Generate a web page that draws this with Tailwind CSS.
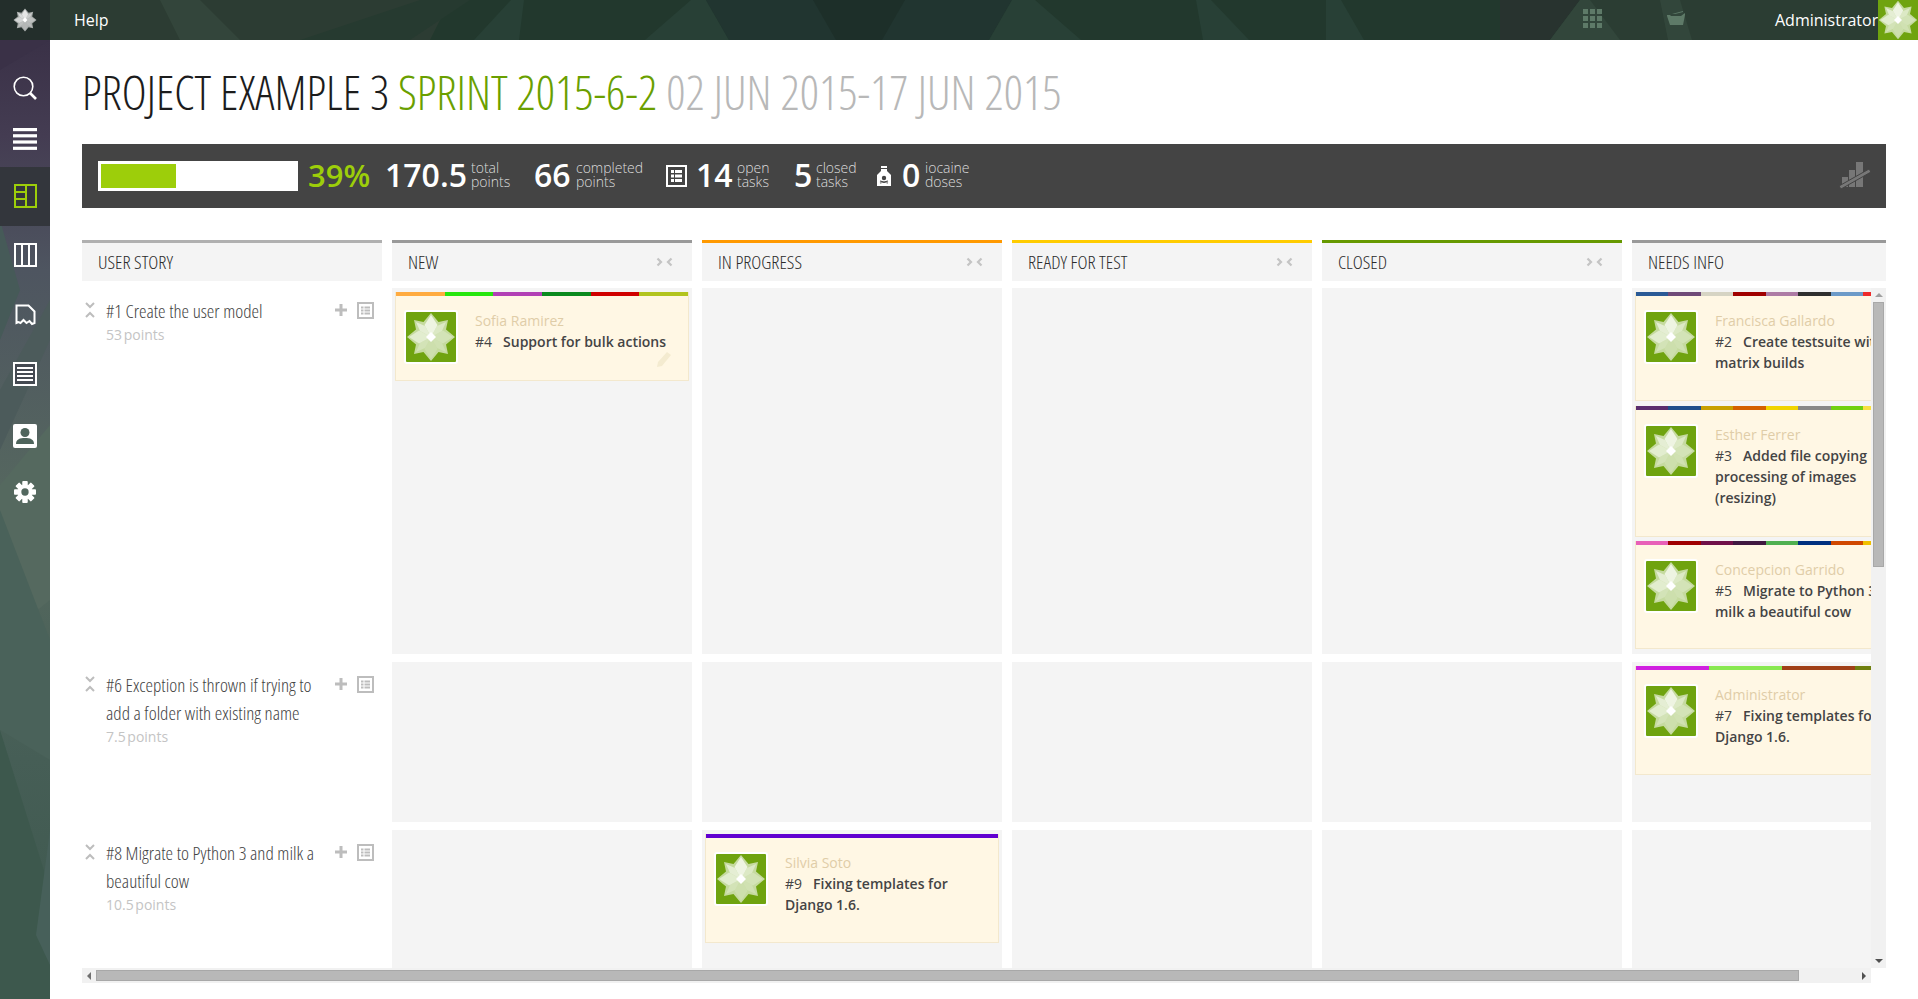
<!DOCTYPE html>
<html lang="en">
<head>
<meta charset="utf-8">
<title>Taskboard</title>
<script src="https://cdn.jsdelivr.net/npm/@tailwindcss/browser@4"></script>
</head>
<body class="bg-white font-['Open_Sans',sans-serif] text-[#444] overflow-hidden">
<svg width="0" height="0" class="absolute">
  <symbol id="star" viewBox="0 0 100 100">
    <g fill="#fff">
      <polygon points="50,2 65,20 84,16 80,35 98,50 80,65 84,84 65,80 50,98 35,80 16,84 20,65 2,50 20,35 16,16 35,20" opacity=".6"/>
      <polygon points="50,50 37,26 50,6 63,26" opacity=".7"/>
      <polygon points="50,50 74,37 94,50 74,63" opacity=".25"/>
      <polygon points="50,50 63,74 50,94 37,74" opacity=".15"/>
      <polygon points="50,50 26,63 6,50 26,37" opacity=".5"/>
      <polygon points="50,50 62,28 80,20 72,38" opacity=".4"/>
      <polygon points="50,50 72,62 80,80 62,72" opacity=".2"/>
      <polygon points="50,50 38,72 20,80 28,62" opacity=".25"/>
      <polygon points="50,50 28,38 20,20 38,28" opacity=".55"/>
      <polygon points="50,40 60,50 50,60 40,50"/>
    </g>
  </symbol>
  <symbol id="boardicon" viewBox="0 0 17 17">
    <rect x="1" y="1" width="15" height="15" fill="none" stroke="#bdbdbd" stroke-width="2"/>
    <g fill="#bdbdbd"><rect x="4" y="4.5" width="2.5" height="2"/><rect x="7.5" y="4.5" width="5.5" height="2"/><rect x="4" y="7.5" width="2.5" height="2"/><rect x="7.5" y="7.5" width="5.5" height="2"/><rect x="4" y="10.5" width="2.5" height="2"/><rect x="7.5" y="10.5" width="5.5" height="2"/></g>
  </symbol>
  <symbol id="fold" viewBox="0 0 10 16">
    <path d="M1 1l4 4 4-4M1 15l4-4 4 4" fill="none" stroke="#bdbdbd" stroke-width="2"/>
  </symbol>
  <symbol id="squish" viewBox="0 0 17 10">
    <path d="M1.5 1.5L5 5 1.5 8.5M15.5 1.5L12 5l3.5 3.5" fill="none" stroke="#c4c4c4" stroke-width="2.2"/>
  </symbol>
  <symbol id="plus" viewBox="0 0 12 12">
    <path d="M4.5 0h3v4.5H12v3H7.5V12h-3V7.5H0v-3h4.5z" fill="#bdbdbd"/>
  </symbol>
</svg>

<!-- top bar -->
<header class="relative h-10 bg-[#22382d] flex items-center overflow-hidden">
  <svg class="absolute inset-0" width="1918" height="40" aria-hidden="true">
    <polygon points="50,0 450,0 430,40 50,40" fill="#2c3c33"/>
    <polygon points="160,0 200,0 240,40 180,40" fill="#33453b"/>
    <polygon points="420,0 470,0 410,40 300,40" fill="#263a30"/>
    <polygon points="511,0 524,0 519,40 474,40" fill="#284036"/>
    <polygon points="691,0 706,0 729,40 645,40" fill="#284036"/>
    <polygon points="706,0 1012,0 989,40 729,40" fill="#213530"/>
    <polygon points="813,0 905,0 882,40 836,40" fill="#1d2f29"/>
    <polygon points="1012,0 1035,0 1081,40 989,40" fill="#284036"/>
    <polygon points="1196,0 1211,0 1249,40 1203,40" fill="#284036"/>
    <polygon points="1326,0 1341,0 1364,40 1326,40" fill="#284036"/>
    <polygon points="1500,0 1580,0 1550,40 1500,40" fill="#28332f"/>
    <polygon points="1580,0 1878,0 1878,40 1550,40" fill="#2b3d33"/>
    <polygon points="1580,0 1590,0 1620,40 1550,40" fill="#32463b"/>
    <polygon points="1660,0 1680,0 1692,40 1668,40" fill="#32463b"/>
  </svg>
  <div class="relative w-[50px] h-10 bg-[#232e2b] flex items-center justify-center shrink-0">
    <svg class="w-6 h-6"><use href="#star"/></svg>
  </div>
  <span class="relative ml-6 text-[16px] text-white">Help</span>
  <div class="relative ml-auto flex items-center h-10">
    <svg class="w-5 h-5 mr-[63px] mb-[2px]" viewBox="0 0 20 20" fill="#5e7a68" aria-hidden="true"><rect x="0" y="0" width="5" height="5"/><rect x="7" y="0" width="5" height="5"/><rect x="14" y="0" width="5" height="5"/><rect x="0" y="7" width="5" height="5"/><rect x="7" y="7" width="5" height="5"/><rect x="14" y="7" width="5" height="5"/><rect x="0" y="14" width="5" height="5"/><rect x="7" y="14" width="5" height="5"/><rect x="14" y="14" width="5" height="5"/></svg>
    <svg class="w-5 h-5 mr-[89px] mb-[2px]" viewBox="0 0 20 20" fill="#5e7a68" aria-hidden="true"><path d="M1 6h3l1 1h10l4-3v2l-2 10H4L1 7z"/><path d="M6 5l11-3v1L9 5z"/></svg>
    <span class="text-[16px] text-white w-[103px] whitespace-nowrap">Administrator</span>
    <div class="relative w-10 h-10 bg-[#6fa30f] shrink-0"><svg class="w-10 h-10"><use href="#star"/></svg></div>
  </div>
</header>

<div class="flex h-[959px]">
  <!-- sidebar -->
  <nav class="relative w-[50px] shrink-0 overflow-hidden bg-[linear-gradient(180deg,#3a3147_0%,#443c52_10%,#4e5560_24%,#56695f_50%,#465e56_75%,#3d584d_100%)]">
    <svg class="absolute inset-0" width="50" height="959" aria-hidden="true">
      <polygon points="0,30 50,0 50,0 0,0" fill="#3a3147"/>
      <polygon points="0,180 20,250 0,300" fill="#465a58"/>
      <polygon points="50,300 0,410 0,350 50,260" fill="#4c5b5b"/>
      <polygon points="50,385 0,445 0,600 50,560" fill="#55695f"/>
      <polygon points="0,470 50,600 50,720 0,690" fill="#4a625a"/>
      <polygon points="0,690 50,850 50,959 0,959" fill="#3d584d"/>
      <polygon points="50,790 36,895 50,925" fill="#47605a"/>
    </svg>
    <div class="relative pt-[22px] flex flex-col">
      <a class="h-[52px] flex items-center justify-center"><svg class="w-6 h-6" viewBox="0 0 24 24" fill="none" stroke="#fff" aria-hidden="true"><circle cx="10.5" cy="10.5" r="9.3" stroke-width="1.6"/><path d="M17 17l6 6" stroke-width="2.6"/></svg></a>
      <a class="h-[53px] flex items-center justify-center"><svg class="w-6 h-[22px] mb-1" viewBox="0 0 24 22" fill="#fff" aria-hidden="true"><rect y="0" width="24" height="3.2"/><rect y="6.2" width="24" height="3.2"/><rect y="12.4" width="24" height="3.2"/><rect y="18.7" width="24" height="3.2"/></svg></a>
      <a class="h-[59px] flex items-center justify-center bg-[#33363c]"><svg class="w-[23px] h-6 mb-[2px]" viewBox="0 0 23 24" fill="none" stroke="#9dce0a" stroke-width="2" aria-hidden="true"><rect x="1" y="1" width="21" height="22"/><path d="M12 1v22M1 8h11M1 15h11"/></svg></a>
      <a class="h-[59px] flex items-center justify-center"><svg class="w-[23px] h-6 mb-[2px]" viewBox="0 0 23 24" fill="none" stroke="#fff" stroke-width="2" aria-hidden="true"><rect x="1" y="1" width="21" height="22"/><path d="M8 1v22M15 1v22"/></svg></a>
      <a class="h-[59px] flex items-center justify-center"><svg class="w-[21px] h-[22px]" viewBox="0 0 21 22" fill="none" stroke="#fff" stroke-width="2" aria-hidden="true"><path d="M1.5 19V1.500h12l6 6V19l-2.500 1-2.500-3-3 2-3-3-3 3-2-1z"/></svg></a>
      <a class="h-[59px] flex items-center justify-center"><svg class="w-6 h-6" viewBox="0 0 24 24" aria-hidden="true"><rect x="1" y="1" width="22" height="22" fill="#454a52" stroke="#fff" stroke-width="2"/><path d="M4 6h16M4 10h16M4 14h16M4 18h16" stroke="#fff" stroke-width="2"/></svg></a>
      <a class="h-[62px] flex items-center justify-center"><svg class="w-6 h-6 mt-1" viewBox="0 0 24 24" aria-hidden="true"><rect width="24" height="24" rx="2" fill="#fff"/><circle cx="12" cy="8.500" r="4.500" fill="#4e645c"/><path d="M3 20c0-5 4-6 9-6s9 1 9 6z" fill="#4e645c"/></svg></a>
      <a class="h-[56px] flex items-center justify-center"><svg class="w-[22px] h-[22px] mb-[2px]" viewBox="0 0 24 24" aria-hidden="true"><g fill="#fff"><circle cx="12" cy="12" r="8"/><rect x="9" y="0" width="6" height="24" rx="1"/><rect x="9" y="0" width="6" height="24" rx="1" transform="rotate(45 12 12)"/><rect x="9" y="0" width="6" height="24" rx="1" transform="rotate(90 12 12)"/><rect x="9" y="0" width="6" height="24" rx="1" transform="rotate(135 12 12)"/></g><circle cx="12" cy="12" r="4" fill="#53685f"/></svg></a>
    </div>
  </nav>

  <!-- main -->
  <main class="flex-1 min-w-0 pl-8 pr-8">
    <h1 class="h-[104px] pt-[21px] text-[47.3px] leading-[62px] font-light font-stretch-[75%] whitespace-nowrap text-[#1c1c1c]">PROJECT EXAMPLE 3 <span class="text-[#6a9f00]">SPRINT 2015-6-2</span> <span class="text-[#b8b8b8]">02 JUN 2015-17 JUN 2015</span></h1>

    <!-- stats -->
    <section class="relative h-16 bg-[#444] flex items-center text-white pl-4">
      <div class="w-[200px] h-[30px] bg-white p-[3px] shrink-0"><div class="w-[75px] h-full bg-[#9dce0a]"></div></div>
      <span class="ml-[10px] w-[77px] text-[31px] leading-none font-semibold text-[#9dce0a] -mt-[2px]">39%</span>
      <span class="text-[32px] leading-none font-semibold w-[86px] -mt-[2px]">170.5</span>
      <span class="text-[14px] leading-[14px] font-light text-[#dcdcdc] w-[63px] -mt-[3px]">total<br>points</span>
      <span class="text-[32px] leading-none font-semibold w-[42px] -mt-[2px]">66</span>
      <span class="text-[14px] leading-[14px] font-light text-[#dcdcdc] w-[90px] -mt-[3px]">completed<br>points</span>
      <svg class="w-[21px] h-[22px] mr-[9px]" viewBox="0 0 21 22" aria-hidden="true"><rect x="1" y="1" width="19" height="20" fill="none" stroke="#fff" stroke-width="2"/><g fill="#fff"><rect x="5" y="5" width="3" height="3"/><rect x="9" y="5" width="7" height="3"/><rect x="5" y="9.500" width="3" height="3"/><rect x="9" y="9.500" width="7" height="3"/><rect x="5" y="14" width="3" height="3"/><rect x="9" y="14" width="7" height="3"/></g></svg>
      <span class="text-[32px] leading-none font-semibold w-[41px] -mt-[2px]">14</span>
      <span class="text-[14px] leading-[14px] font-light text-[#dcdcdc] w-[57px] -mt-[3px]">open<br>tasks</span>
      <span class="text-[32px] leading-none font-semibold w-[22px] -mt-[2px]">5</span>
      <span class="text-[14px] leading-[14px] font-light text-[#dcdcdc] w-[60px] -mt-[3px]">closed<br>tasks</span>
      <svg class="w-4 h-[22px] mr-[10px]" viewBox="0 0 16 22" aria-hidden="true"><path d="M5 1h6v2H5zM5 4h6v2l4 4v11H1V10l4-4z" fill="#fff"/><circle cx="8" cy="13" r="2.200" fill="#444"/><path d="M4 18l8-2M4 16l8 2" stroke="#444" stroke-width="1.200"/></svg>
      <span class="text-[32px] leading-none font-semibold w-[23px] -mt-[2px]">0</span>
      <span class="text-[14px] leading-[14px] font-light text-[#dcdcdc] -mt-[3px]">iocaine<br>doses</span>
      <svg class="absolute right-[15px] top-[18px] w-8 h-7" viewBox="0 0 32 28" fill="#777" aria-hidden="true"><rect x="17" y="0" width="7" height="25"/><rect x="10" y="8" width="6" height="17"/><rect x="3" y="15" width="6" height="10"/><path d="M0 24L30 7l2 3L2 27z" stroke="#444" stroke-width="1"/></svg>
    </section>

    <!-- board -->
    <section class="mt-8 w-[1804px] relative">
      <div class="flex gap-[10px] overflow-hidden text-[19px] font-light font-stretch-[75%] text-[#2b2b2b]">
        <div class="w-[300px] shrink-0 h-[41px] bg-[#f4f4f4] border-t-[3px] border-[#b0b0b0] pl-4 flex items-center"><span>USER STORY</span></div>
        <div class="w-[300px] shrink-0 h-[41px] bg-[#f4f4f4] border-t-[3px] border-[#999] pl-4 pr-[19px] flex justify-between items-center"><span>NEW</span><svg class="w-[17px] h-[10px]"><use href="#squish"/></svg></div>
        <div class="w-[300px] shrink-0 h-[41px] bg-[#f4f4f4] border-t-[3px] border-[#f90] pl-4 pr-[19px] flex justify-between items-center"><span>IN PROGRESS</span><svg class="w-[17px] h-[10px]"><use href="#squish"/></svg></div>
        <div class="w-[300px] shrink-0 h-[41px] bg-[#f4f4f4] border-t-[3px] border-[#fc0] pl-4 pr-[19px] flex justify-between items-center"><span>READY FOR TEST</span><svg class="w-[17px] h-[10px]"><use href="#squish"/></svg></div>
        <div class="w-[300px] shrink-0 h-[41px] bg-[#f4f4f4] border-t-[3px] border-[#690] pl-4 pr-[19px] flex justify-between items-center"><span>CLOSED</span><svg class="w-[17px] h-[10px]"><use href="#squish"/></svg></div>
        <div class="w-[254px] shrink-0 h-[41px] bg-[#f4f4f4] border-t-[3px] border-[#999] pl-4 flex items-center"><span>NEEDS INFO</span></div>
      </div>

      <div class="mt-[7px] flex h-[680px]">
        <div class="w-[1789px] overflow-hidden flex flex-col gap-2">
          <!-- row 1 -->
          <div class="flex gap-[10px] h-[366px] shrink-0">
            <div class="w-[300px] shrink-0 flex pt-[14px] pl-[3px]">
              <svg class="w-[10px] h-4 shrink-0"><use href="#fold"/></svg>
              <div class="ml-[11px] w-[209px]">
                <p class="text-[19px] leading-7 font-light font-stretch-[75%] text-[#444] mt-[-5px]">#1 Create the user model</p>
                <p class="text-[14px] leading-5 text-[#c4c4c4] [word-spacing:-2px]">53 points</p>
              </div>
              <svg class="w-3 h-3 mt-[2px] ml-[20px]"><use href="#plus"/></svg>
              <svg class="w-[17px] h-[17px] ml-[10px]"><use href="#boardicon"/></svg>
            </div>
            <div class="w-[300px] shrink-0 bg-[#f4f4f4] pt-1 px-[3px]">
              <article class="relative h-[89px] bg-[#fff7e4] border-x border-b border-[#f3e8cd]">
                <div class="flex h-1"><i class="flex-1 bg-[#ffab40]"></i><i class="flex-1 bg-[#26e60e]"></i><i class="flex-1 bg-[#b23fb5]"></i><i class="flex-1 bg-[#0a8a1e]"></i><i class="flex-1 bg-[#d00000]"></i><i class="flex-1 bg-[#b2c41e]"></i></div>
                <div class="flex pt-[14px] pl-2">
                  <div class="w-[54px] h-[54px] border-2 border-white rounded-[3px] bg-[#6fa30f] shrink-0"><svg class="w-[50px] h-[50px]"><use href="#star"/></svg></div>
                  <div class="ml-[17px] w-[205px] text-[14px] leading-[21px]"><p class="text-[#dfcda8]">Sofia Ramirez</p><p><span class="mr-[11px]">#4</span><b class="font-semibold">Support for bulk actions</b></p></div>
                </div>
                <svg class="absolute right-[16px] bottom-[13px] w-4 h-4" viewBox="0 0 16 16" fill="#f4ebd0" aria-hidden="true"><path d="M11 1l4 3-9 11-5 1 1-5z"/></svg>
              </article>
            </div>
            <div class="w-[300px] shrink-0 bg-[#f4f4f4]"></div>
            <div class="w-[300px] shrink-0 bg-[#f4f4f4]"></div>
            <div class="w-[300px] shrink-0 bg-[#f4f4f4]"></div>
            <div class="w-[300px] shrink-0 bg-[#f4f4f4] pt-1 px-[3px] flex flex-col">
              <article class="h-[109px] shrink-0 bg-[#fff7e4] border-x border-b border-[#f3e8cd]">
                <div class="flex h-1"><i class="flex-1 bg-[#2a5a96]"></i><i class="flex-1 bg-[#6f4a78]"></i><i class="flex-1 bg-[#d6d4c4]"></i><i class="flex-1 bg-[#a00000]"></i><i class="flex-1 bg-[#ad7ba5]"></i><i class="flex-1 bg-[#2f2f2f]"></i><i class="flex-1 bg-[#6c9ac8]"></i><i class="flex-1 bg-[#ee2a2a]"></i><i class="flex-1 bg-[#888]"></i></div>
                <div class="flex pt-[14px] pl-2">
                  <div class="w-[54px] h-[54px] border-2 border-white rounded-[3px] bg-[#6fa30f] shrink-0"><svg class="w-[50px] h-[50px]"><use href="#star"/></svg></div>
                  <div class="ml-[17px] w-[205px] text-[14px] leading-[21px]"><p class="text-[#dfcda8]">Francisca Gallardo</p><p><span class="mr-[11px]">#2</span><b class="font-semibold">Create testsuite with matrix builds</b></p></div>
                </div>
              </article>
              <article class="mt-[5px] h-[131px] shrink-0 bg-[#fff7e4] border-x border-b border-[#f3e8cd]">
                <div class="flex h-1"><i class="flex-1 bg-[#5a2d6e]"></i><i class="flex-1 bg-[#1f4e8c]"></i><i class="flex-1 bg-[#c8a000]"></i><i class="flex-1 bg-[#d46000]"></i><i class="flex-1 bg-[#f0d400]"></i><i class="flex-1 bg-[#888]"></i><i class="flex-1 bg-[#70d010]"></i><i class="flex-1 bg-[#f8e040]"></i><i class="flex-1 bg-[#888]"></i></div>
                <div class="flex pt-[14px] pl-2">
                  <div class="w-[54px] h-[54px] border-2 border-white rounded-[3px] bg-[#6fa30f] shrink-0"><svg class="w-[50px] h-[50px]"><use href="#star"/></svg></div>
                  <div class="ml-[17px] w-[205px] text-[14px] leading-[21px]"><p class="text-[#dfcda8]">Esther Ferrer</p><p><span class="mr-[11px]">#3</span><b class="font-semibold">Added file copying and processing of images (resizing)</b></p></div>
                </div>
              </article>
              <article class="mt-1 h-[108px] shrink-0 bg-[#fff7e4] border-x border-b border-[#f3e8cd]">
                <div class="flex h-1"><i class="flex-1 bg-[#e860b8]"></i><i class="flex-1 bg-[#a00000]"></i><i class="flex-1 bg-[#701048]"></i><i class="flex-1 bg-[#401840]"></i><i class="flex-1 bg-[#50b050]"></i><i class="flex-1 bg-[#003080]"></i><i class="flex-1 bg-[#d04800]"></i><i class="flex-1 bg-[#f0c000]"></i><i class="flex-1 bg-[#888]"></i></div>
                <div class="flex pt-[14px] pl-2">
                  <div class="w-[54px] h-[54px] border-2 border-white rounded-[3px] bg-[#6fa30f] shrink-0"><svg class="w-[50px] h-[50px]"><use href="#star"/></svg></div>
                  <div class="ml-[17px] w-[205px] text-[14px] leading-[21px]"><p class="text-[#dfcda8]">Concepcion Garrido</p><p><span class="mr-[11px]">#5</span><b class="font-semibold">Migrate to Python 3 and milk a beautiful cow</b></p></div>
                </div>
              </article>
            </div>
          </div>
          <!-- row 2 -->
          <div class="flex gap-[10px] h-[160px] shrink-0">
            <div class="w-[300px] shrink-0 flex pt-[14px] pl-[3px]">
              <svg class="w-[10px] h-4 shrink-0"><use href="#fold"/></svg>
              <div class="ml-[11px] w-[209px]">
                <p class="text-[19px] leading-7 font-light font-stretch-[75%] text-[#444] mt-[-5px]">#6 Exception is thrown if trying to add a folder with existing name</p>
                <p class="text-[14px] leading-5 text-[#c4c4c4] [word-spacing:-2px]">7.5 points</p>
              </div>
              <svg class="w-3 h-3 mt-[2px] ml-[20px]"><use href="#plus"/></svg>
              <svg class="w-[17px] h-[17px] ml-[10px]"><use href="#boardicon"/></svg>
            </div>
            <div class="w-[300px] shrink-0 bg-[#f4f4f4]"></div>
            <div class="w-[300px] shrink-0 bg-[#f4f4f4]"></div>
            <div class="w-[300px] shrink-0 bg-[#f4f4f4]"></div>
            <div class="w-[300px] shrink-0 bg-[#f4f4f4]"></div>
            <div class="w-[300px] shrink-0 bg-[#f4f4f4] pt-1 px-[3px]">
              <article class="h-[109px] bg-[#fff7e4] border-x border-b border-[#f3e8cd]">
                <div class="flex h-1"><i class="flex-1 bg-[#d020e0]"></i><i class="flex-1 bg-[#88e850]"></i><i class="flex-1 bg-[#a04018]"></i><i class="flex-1 bg-[#708010]"></i></div>
                <div class="flex pt-[14px] pl-2">
                  <div class="w-[54px] h-[54px] border-2 border-white rounded-[3px] bg-[#6fa30f] shrink-0"><svg class="w-[50px] h-[50px]"><use href="#star"/></svg></div>
                  <div class="ml-[17px] w-[205px] text-[14px] leading-[21px]"><p class="text-[#dfcda8]">Administrator</p><p><span class="mr-[11px]">#7</span><b class="font-semibold">Fixing templates for Django 1.6.</b></p></div>
                </div>
              </article>
            </div>
          </div>
          <!-- row 3 -->
          <div class="flex gap-[10px] h-[160px] shrink-0">
            <div class="w-[300px] shrink-0 flex pt-[14px] pl-[3px]">
              <svg class="w-[10px] h-4 shrink-0"><use href="#fold"/></svg>
              <div class="ml-[11px] w-[209px]">
                <p class="text-[19px] leading-7 font-light font-stretch-[75%] text-[#444] mt-[-5px]">#8 Migrate to Python 3 and milk a beautiful cow</p>
                <p class="text-[14px] leading-5 text-[#c4c4c4] [word-spacing:-2px]">10.5 points</p>
              </div>
              <svg class="w-3 h-3 mt-[2px] ml-[20px]"><use href="#plus"/></svg>
              <svg class="w-[17px] h-[17px] ml-[10px]"><use href="#boardicon"/></svg>
            </div>
            <div class="w-[300px] shrink-0 bg-[#f4f4f4]"></div>
            <div class="w-[300px] shrink-0 bg-[#f4f4f4] pt-1 px-[3px]">
              <article class="h-[109px] bg-[#fff7e4] border-x border-b border-[#f3e8cd]">
                <div class="flex h-1"><i class="flex-1 bg-[#6000d0]"></i></div>
                <div class="flex pt-[14px] pl-2">
                  <div class="w-[54px] h-[54px] border-2 border-white rounded-[3px] bg-[#6fa30f] shrink-0"><svg class="w-[50px] h-[50px]"><use href="#star"/></svg></div>
                  <div class="ml-[17px] w-[205px] text-[14px] leading-[21px]"><p class="text-[#dfcda8]">Silvia Soto</p><p><span class="mr-[11px]">#9</span><b class="font-semibold">Fixing templates for Django 1.6.</b></p></div>
                </div>
              </article>
            </div>
            <div class="w-[300px] shrink-0 bg-[#f4f4f4]"></div>
            <div class="w-[300px] shrink-0 bg-[#f4f4f4]"></div>
            <div class="w-[300px] shrink-0 bg-[#f4f4f4]"></div>
          </div>
        </div>
        <!-- vertical scrollbar -->
        <div class="w-[15px] shrink-0 bg-[#f1f1f1] flex flex-col items-center relative">
          <div class="mt-[5px] w-0 h-0 border-x-[4px] border-x-transparent border-b-[4px] border-b-[#a0a0a0]"></div>
          <div class="mt-[5px] w-[11px] h-[265px] bg-[#b8b8b8] border border-[#a8a8a8]"></div>
          <div class="mt-auto mb-[5px] w-0 h-0 border-x-[4px] border-x-transparent border-t-[4px] border-t-[#505050]"></div>
        </div>
      </div>
      <!-- horizontal scrollbar -->
      <div class="w-[1789px] h-[15px] bg-[#f1f1f1] flex items-center">
        <div class="ml-[5px] w-0 h-0 border-y-[4px] border-y-transparent border-r-[4px] border-r-[#707070]"></div>
        <div class="ml-[5px] w-[1703px] h-[11px] bg-[#b8b8b8] border border-[#a8a8a8]"></div>
        <div class="ml-auto mr-[5px] w-0 h-0 border-y-[4px] border-y-transparent border-l-[4px] border-l-[#505050]"></div>
      </div>
    </section>
  </main>
</div>
</body>
</html>
